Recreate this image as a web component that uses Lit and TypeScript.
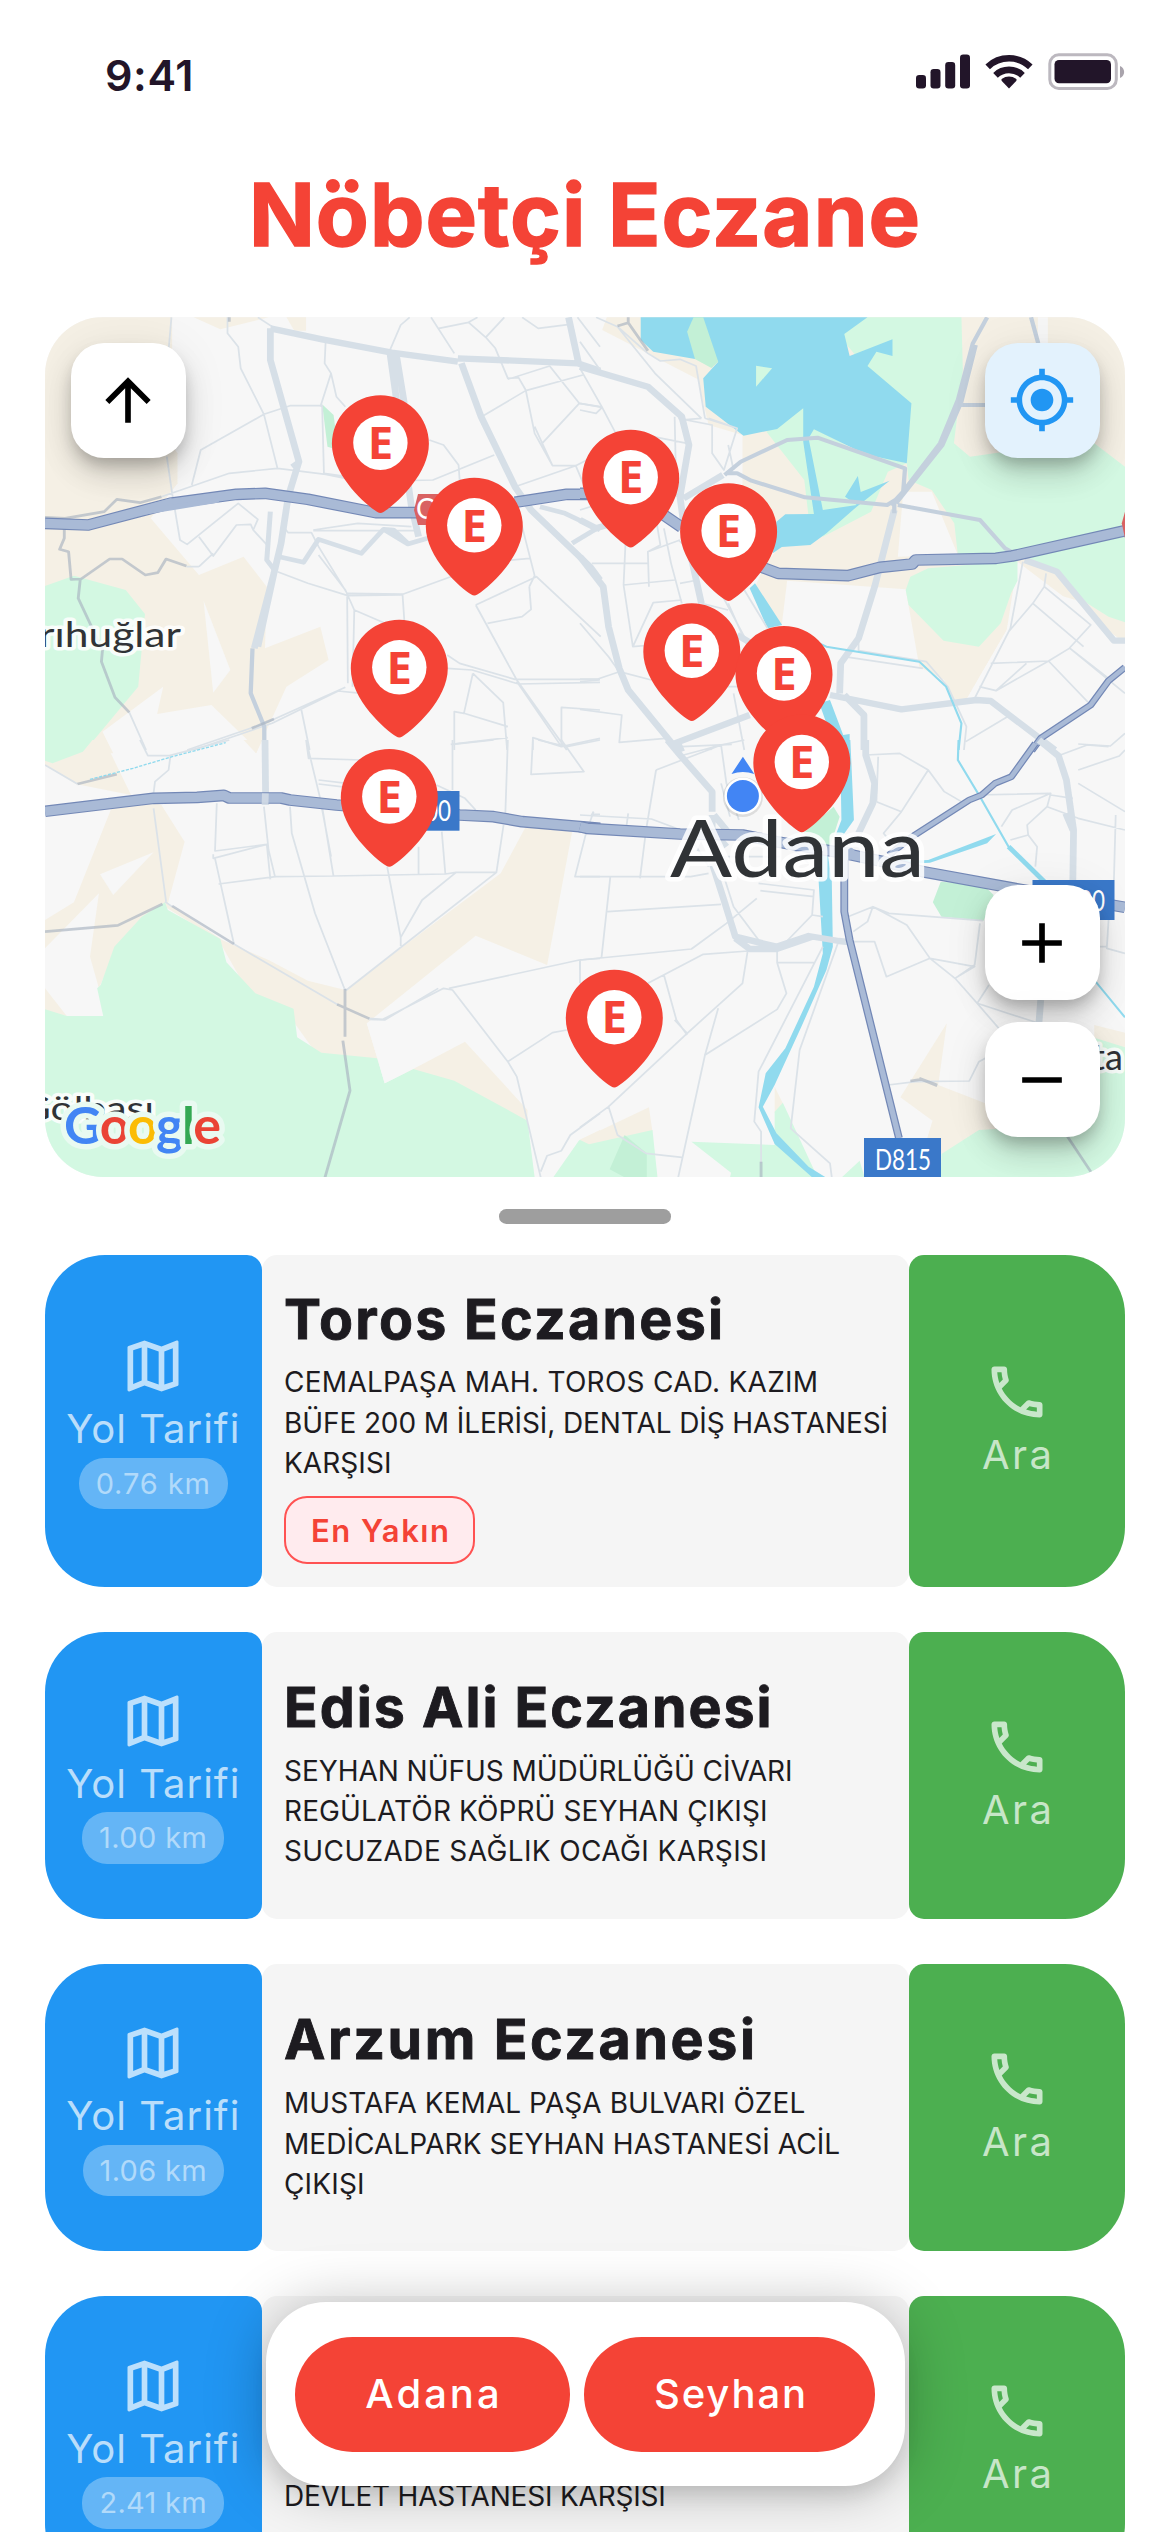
import { LitElement, html, svg, css, nothing } from 'lit';
import { customElement, property } from 'lit/decorators.js';
import { styleMap } from 'lit/directives/style-map.js';

interface Line {
  text: string;
  tracking: number;
}

interface Pharmacy {
  name: Line;
  distance: Line;
  address: Line[];
  nearest?: boolean;
}

const PHARMACIES: Pharmacy[] = [
  {
    name: { text: 'Toros Eczanesi', tracking: 2.3 },
    distance: { text: '0.76 km', tracking: 0.9 },
    address: [
      { text: 'CEMALPAŞA MAH. TOROS CAD. KAZIM', tracking: 0.27 },
      { text: 'BÜFE 200 M İLERİSİ, DENTAL DİŞ HASTANESİ', tracking: -0.1 },
      { text: 'KARŞISI', tracking: 0.05 },
    ],
    nearest: true,
  },
  {
    name: { text: 'Edis Ali Eczanesi', tracking: 2 },
    distance: { text: '1.00 km', tracking: 0.4 },
    address: [
      { text: 'SEYHAN NÜFUS MÜDÜRLÜĞÜ CİVARI', tracking: -0.04 },
      { text: 'REGÜLATÖR KÖPRÜ SEYHAN ÇIKIŞI', tracking: 0.11 },
      { text: 'SUCUZADE SAĞLIK OCAĞI KARŞISI', tracking: 0.38 },
    ],
  },
  {
    name: { text: 'Arzum Eczanesi', tracking: 2.6 },
    distance: { text: '1.06 km', tracking: 0.3 },
    address: [
      { text: 'MUSTAFA KEMAL PAŞA BULVARI ÖZEL', tracking: 0.06 },
      { text: 'MEDİCALPARK SEYHAN HASTANESİ ACİL', tracking: 0.06 },
      { text: 'ÇIKIŞI', tracking: 0.15 },
    ],
  },
  {
    name: { text: '', tracking: 0 },
    distance: { text: '2.41 km', tracking: 0.3 },
    address: [
      { text: '', tracking: 0 },
      { text: 'DEVLET HASTANESI KARŞISI', tracking: -0.2 },
    ],
  },
];

const tracking = (line: Line) => styleMap({ letterSpacing: `${line.tracking}px` });

const ICONS = {
  up: 'M4 12l1.41 1.41L11 7.83V20h2V7.83l5.58 5.59L20 12l-8-8-8 8z',
  locate:
    'M12 8c-2.21 0-4 1.79-4 4s1.79 4 4 4 4-1.79 4-4-1.79-4-4-4zm8.94 3c-.46-4.17-3.77-7.48-7.94-7.94V1h-2v2.06C6.83 3.52 3.52 6.83 3.06 11H1v2h2.06c.46 4.17 3.77 7.48 7.94 7.94V23h2v-2.06c4.17-.46 7.48-3.77 7.94-7.94H23v-2h-2.06zM12 19c-3.87 0-7-3.13-7-7s3.13-7 7-7 7 3.13 7 7-3.13 7-7 7z',
  plus: 'M19 13h-6v6h-2v-6H5v-2h6V5h2v6h6v2z',
  minus: 'M19 13H5v-2h14v2z',
  map: 'M20.5 3l-.16.03L15 5.1 9 3 3.36 4.9c-.21.07-.36.25-.36.48V20.5c0 .28.22.5.5.5l.16-.03L9 18.9l6 2.1 5.64-1.9c.21-.07.36-.25.36-.48V3.5c0-.28-.22-.5-.5-.5zM10 5.47l4 1.4v11.66l-4-1.4V5.47zm-5 .99l3-1.01v11.7l-3 1.16V6.46zm14 11.08l-3 1.01V6.86l3-1.16v11.84z',
  phone:
    'M6.54 5c.06.89.21 1.76.45 2.59l-1.2 1.2c-.41-1.2-.67-2.47-.76-3.79h1.51m9.86 12.02c.85.24 1.72.39 2.6.45v1.49c-1.32-.09-2.59-.35-3.8-.75l1.2-1.19M7.5 3H4c-.55 0-1 .45-1 1 0 9.39 7.61 17 17 17 .55 0 1-.45 1-1v-3.49c0-.55-.45-1-1-1-1.24 0-2.45-.2-3.57-.57-.1-.04-.21-.05-.31-.05-.26 0-.51.1-.71.29l-2.2 2.2c-2.83-1.45-5.15-3.76-6.59-6.59l2.2-2.2c.28-.28.36-.67.25-1.02C8.7 6.45 8.5 5.25 8.5 4c0-.55-.45-1-1-1z',
};

const icon = (d: string) =>
  html`<svg class="icon" viewBox="0 0 24 24" width="68" height="68"><path fill="currentColor" d=${d}></path></svg>`;

@customElement('status-bar')
export class StatusBar extends LitElement {
  static styles = css`
    :host {
      display: flex;
      justify-content: space-between;
      height: 120px;
      box-sizing: border-box;
      padding: 50px 45px 0 105px;
      color: #221529;
    }
    .time {
      font-size: 43px;
      font-weight: 600;
      line-height: 50px;
      letter-spacing: 0.6px;
    }
    .system {
      display: block;
    }
  `;

  render() {
    return html`
      <span class="time">9:41</span>
      <svg class="system" width="210" height="44" viewBox="915 50 210 44">
        <g fill="#221529">
          <rect x="916" y="75" width="10" height="13.5" rx="3.2"></rect>
          <rect x="930.5" y="69" width="10" height="19.5" rx="3.2"></rect>
          <rect x="945.2" y="62" width="10" height="26.5" rx="3.2"></rect>
          <rect x="960" y="54.5" width="10" height="34" rx="3.2"></rect>
          <path d="M1009 88.500l-7.200-7.400a1.600 1.600 0 0 1 .2-2.300 11.500 11.500 0 0 1 14 0 1.600 1.600 0 0 1 .2 2.300z"></path>
        </g>
        <g fill="none" stroke="#221529" stroke-width="6.600">
          <path d="M995.500 75.300a19.500 19.500 0 0 1 27 0"></path>
          <path d="M987.700 66.800a31 31 0 0 1 42.600 0"></path>
        </g>
        <rect x="1049.800" y="54.800" width="66.500" height="33.600" rx="9" fill="none" stroke="#bcb8bf" stroke-width="3"></rect>
        <rect x="1054.500" y="60" width="56.500" height="23.300" rx="4.500" fill="#221529"></rect>
        <path d="M1120 66c5.500 2 5.500 10 0 12z" fill="#a9a4ac"></path>
      </svg>
    `;
  }
}

/* Tile drawings use a 1568-unit-wide grid per tile; y runs at three units per pixel. */
const tile = (x: number, y: number, content: unknown) =>
  svg`<g transform=${`translate(${x} ${y}) scale(.35714 .33333)`}>${content}</g>`;

const land = svg`
  ${tile(40, 310, svg`
    <path class="sand" d="M14 22H370V500L385 520 310 625 445 795 570 740 635 830 630 1015 785 950 808 1050 690 1130 605 1330 590 1300 480 1185 328 1212 345 1130 175 1265 205 1330H14zM430 22L505 58 640 22zM690 22L712 62H745V22z"/>
    <path class="sand" d="M365 400L385 430V520L365 545z"/>
    <path class="base" d="M458 872L533 1080 485 1148z"/>
    <path class="park" d="M14 828L95 797 240 840 294 912 275 1130 120 1330H14z"/>
    <path class="wood" d="M790 283L822 315 835 420 805 410z"/>`)}
  ${tile(580, 310, svg`
    <path class="sand" d="M62 60L75 22H1526V1000L1495 985 1420 880 1225 820 1195 960 1080 1172 1038 1168 1020 1110 950 1070 912 838 580 812 565 945 490 830 520 760 560 710 455 600V375L360 345 330 208z"/>
    <path class="base" d="M1282 22H1310V100H1282zM905 545H985L1058 735 890 740zM1225 755L1526 1000 1300 1320H1100L1040 1168 1080 1172 1195 960z"/>
    <path class="park" d="M805 22H1068L1072 180 1047 400 1092 440 1170 428 1440 400 1526 470V937L1480 920 1420 880 1340 790 1270 750 1225 745 1058 735 1048 640 985 540 920 510 900 300 790 160 720 70zM925 800L975 775 1225 752V812L1207 850 1178 940 1117 1010 1018 992 920 885 912 840zM522 365L625 290 660 358 770 420 915 460 862 485 815 605 680 680 640 620 628 510zM322 147L372 173 345 100z"/>
    <path class="water" d="M170 22H805L740 72 755 138 875 88V138L830 125 805 168 928 280 915 460 830 440 770 418 655 358 640 385 680 600 775 585 742 560 778 498 786 546 867 512 775 590 690 670 645 705 565 711 540 730 550 635 575 613 655 612 625 395V295L552 357 458 377 352 290 345 205 387 155 345 100 322 147 205 125 170 90zM475 835L490 820 566 945 525 955zM670 1180L700 1170 737 1275 755 1272V1330H720z"/>
    <path class="park" d="M493 167L538 175 493 230z"/>
    <path class="wood" d="M318 22H345L387 155 368 174 322 147 300 65z"/>`)}
  ${tile(40, 740, svg`
    <path class="sand" d="M14 0H180L255 165 340 195 405 305 358 490 510 600 640 660 750 722 855 750 1290 400 1360 260 1490 275 1420 675 1220 587 915 850 945 955 1190 905 1365 1110V1145L1030 1000 900 960 780 950 700 830 590 770 500 600 350 500 215 620 165 745 140 650 165 460 14 625V540L95 487 200 205 255 165 100 132 14 75zM570 0H622L605 40zM14 745L75 828 14 815zM1510 1200L1568 1170V1205L1540 1213z"/>
    <path class="base" d="M318 337L168 403 205 465z"/>
    <path class="park" d="M14 0H147L120 35 35 70 14 62zM14 808L75 828H177L160 745 170 735 208 620 285 530 350 487 358 510 505 597 522 667 603 760 710 806 720 892 788 938 945 955 965 1030 1045 987 1160 1022 1365 1142 1385 1312H14zM1437 1312L1510 1200 1540 1213 1568 1205V1312z"/>
    <path class="base" d="M915 850L1190 905 1045 987 965 1030z"/>`)}
  ${tile(580, 740, svg`
    <path class="sand" d="M0 1200L193 1102 203 1175 25 1215zM545 1040L568 1090 545 1120zM1027 850L1003 1035 1135 1090 1180 1170 1020 1245 965 1220 987 1142 897 1072zM1440 855L1526 878V925L1440 905z"/>
    <path class="park" d="M0 1200L25 1213 203 1170 217 1312H0zM312 1205L545 1215V1115L568 1088 665 1312H420L423 1298zM733 1312L783 1262 797 1312H1010L1012 1242 1117 1170 1440 1150V893L1526 922V1312z"/>
    <path class="wood" d="M125 1185L187 1240V1312H125L83 1288zM1010 425L1130 435 1158 465 1130 542 1012 530 988 487zM710 200L727 230 700 320 665 310 625 280z"/>
    <path class="water" d="M728 0H757L767 240 737 285H716L732 240zM668 420L672 345H694L705 420 708 620 690 690 622 855 545 1035 512 1100 550 1180 640 1280 688 1312H650L545 1212 500 1102 520 1000 575 925 655 740 680 640zM900 372L908 357 925 362 975 360 1165 282 1140 310 980 368z"/>`)}
`;

const roads = svg`
  ${tile(40, 310, svg`
    <path class="lane" d="M368 22L360 120M610 22L650 50M525 22V70L555 110 562 175 627 313 665 475M627 313L450 420 425 525M627 313L700 287H790L795 490 860 500M800 90L797 160 815 190 785 290M815 190L830 260 855 290M340 560L530 490 665 475 800 493 900 515 1100 510 1272 435M1090 390L1130 405 1172 465 1175 510M980 120L1010 45 1035 22M1095 22L1160 130M1117 55L1200 37 1225 22M1200 37L1248 82 1275 115 1310 205 1340 203 1360 240 1385 370 1435 467H1500L1568 430M1248 82L1300 22M1350 22L1395 55 1478 44M1505 22L1568 110M1240 318L1360 242 1520 195M1310 208L1427 168 1510 280 1568 290M1510 280L1408 398M1385 350L1435 467M1500 467L1525 530 1568 500M1330 530L1500 467M355 440L370 550 392 690 412 703 485 640 555 580 610 628 597 660 640 710M445 680L485 738 550 645 590 643 597 660M445 770L485 730M410 770H445M685 655L695 668H760L780 710 860 850 862 1120M765 662H1050M765 660L890 640 1040 650M665 785L750 820 862 857 1010 855 1150 800M862 850L1015 852 1020 930M780 735L855 840 880 900 1010 960M880 900L875 1130M1220 885L1390 800 1570 980M1370 830L1375 898 1350 920 1253 940M1220 885L1335 1110 1475 1320M1350 650L1385 797 1370 830M1270 755L1372 745M1140 1035L1175 1060 1330 1108H1568M1140 1075L1210 1080 1340 1122 1568 1117M1212 1090L1187 1210 1310 1250M1212 1090L1297 1178 1308 1320M1160 1320V1205L1187 1210M1150 1303L1310 1283M1335 1115L1460 1310 1568 1285M1568 1200L1460 1192V1310M1380 1320V1283L1460 1310M412 1320L630 1240 855 1132M430 1320L650 1240 835 1143 900 1150M732 1200L755 1320M250 1207L297 1320"/>
    <path class="mid" d="M660 738L738 757 780 688 900 730 962 658 1030 702 1085 685M962 658L990 660 1030 700M645 605L635 750 660 785M725 455L705 470M1400 590L1470 610 1568 660M1560 655L1490 700"/>
    <path class="major" d="M645 55L790 88 985 128 1170 155M1170 145L1505 160 1568 182M645 55V150L725 455 695 560 675 700 655 790 600 1015M980 130L1040 590 1060 680M997 130L1020 280M1180 160L1235 320 1330 530 1375 600 1540 770 1568 810M1480 22L1508 160M655 790L610 1010"/>
    <path class="second" d="M595 1015L590 1150 628 1250V1320"/>
    <path class="track" d="M14 622L70 625 180 605 215 568 280 578 340 560M68 655V685L55 718 80 725 87 808 115 807 195 747H230L295 795 330 788 353 747 410 768M113 805L107 865 175 1020 172 1055 210 1162 250 1207M593 1255L655 1227M530 22V35"/>
    <path class="edge" d="M14 640L135 645 365 580 550 553 630 550 750 568 940 608H1060M1330 577L1475 553H1568"/>
    <path class="trunk" d="M14 640L135 645 365 580 550 553 630 550 750 568 940 608H1060M1330 577L1475 553H1568"/>
    <path class="trunk thin" d="M200 625L370 572M260 612L500 570"/>`)}
  ${tile(580, 310, svg`
    <path class="lane" d="M45 22L105 50 210 190 340 325M105 50L190 130 225 153 280 148 325 168 350 325M0 95L60 185M0 175L62 292 110 390M0 280L62 292 45 310 0 300M275 325L370 345V430L403 480 440 355 360 325M350 325L440 355M340 325L280 330M205 380L300 400M415 405L430 480M270 560L265 320M0 600L60 580M235 655L255 760 285 880M215 640L225 705 190 725 193 830M190 725L280 690M33 760H190M122 825L265 810M130 640L122 825 148 1010 205 878 285 870M148 1010L200 1005M280 820L330 810M340 880L415 900M275 690L330 740M0 940L80 1040 110 1085 200 1110M0 1107H50L110 1085M0 1115L55 1110M0 1198L117 1215 110 1297 240 1285M400 860L470 1000M460 840L525 955M415 880L465 1000M410 1130H470M430 1150L460 1320M285 1310L425 1303M365 1320L380 1305M780 985V1022L970 1055 1030 1130 1082 1250 1075 1320M740 1040L960 1075M1240 755L1205 955 1105 1165M1305 790L1300 830 1430 945 1370 1015 1312 1053 1150 1060M1300 830L1268 880 1410 1010M1268 880L1200 965M1372 1015L1526 1150M1312 1053L1430 1185M1480 1105L1372 1015M1250 1060L1165 1142 1118 1130M1312 1053L1165 1142M1080 1295L1205 1215M1526 1270L1485 1308 1395 1302"/>
    <path class="major" d="M0 170L190 230 285 320 305 405 280 560 290 640 340 880M0 630L45 655 140 625M0 740L65 830 80 950 110 1075 135 1140 265 1310M265 1300L475 1215M440 975L480 1000M880 600L825 830 780 985 730 1060 727 1150M700 1155L900 1198 1110 1170 1150 1173 1330 1320M740 1155L795 1215V1320M1245 750L1335 785 1495 992H1526M290 565L400 495"/>
    <path class="second" d="M405 495L450 455 580 390 665 383 910 475 905 545 870 585M410 490H440L480 512 630 562 860 585 890 565 1008 400 1058 270 1100 100 1140 22M885 580L1015 405 1068 275 1108 105M890 585L1120 630 1190 715 1240 745M1060 285H1135M1263 22L1283 100M880 570V610"/>
    <path class="track" d="M105 48L135 38V22M135 38L190 122"/>
    <path class="stream" d="M670 1000L690 1010 950 1055 1025 1130 1068 1240 1060 1320"/>
    <path class="edge" d="M0 550H20M225 608L285 652M510 772L555 790 750 797 840 772 930 762 940 750 1165 745 1210 738 1526 662"/>
    <path class="trunk" d="M0 550H20M225 608L285 652M510 772L555 790 750 797 840 772 930 762 940 750 1165 745 1210 738 1526 662"/>
    <path class="edge slim" d="M1526 1072L1480 1112 1430 1185 1290 1285 1265 1322"/>
    <path class="trunk slim" d="M1526 1072L1480 1112 1430 1185 1290 1285 1265 1322"/>
    <path fill="#d96262" d="M1526 605L1517 640 1526 685z"/>`)}
  ${tile(40, 740, svg`
    <path class="lane" d="M280 0L302 47H362L530 0M365 50L360 90 322 125 318 160M318 205L353 485M495 190L490 333 635 313M485 343V355L635 313 645 418M490 355L543 612M500 432L660 410 820 408 1135 402 1165 397H1278M627 200L640 330 658 410M700 200L705 280 770 520 852 745 858 750 1278 397 1298 255M745 0L790 200 822 410M745 0L752 55 900 60M780 120L860 130M780 132L860 142M785 180L815 350M1155 0V150M1155 13L1270 0M1310 0L1303 220M1395 0L1475 20 1568 0M1460 0L1523 95 1375 103 1380 0M1110 135L1190 175 1220 210M1125 275L1135 402M1060 320V402M1165 397L1070 480 1010 592V618M972 380L1010 592M1530 275L1498 410H1568M1550 215L1540 245M1545 223H1568M543 612L835 795M920 835L960 838 1130 745 1155 750 1310 965 1335 1010 1402 1312M920 838L965 840 1115 745M1145 745L1510 660 1568 655M1512 660V730M1310 965L1435 878 1475 870M1402 1295L1420 1247 1460 1232 1485 1185 1568 1120M350 485L370 500M14 75L105 132"/>
    <path class="major" d="M630 0L632 195"/>
    <path class="track" d="M105 132L215 103M14 575L218 556 343 492M370 498L543 612M832 793L922 836M854 747V890M848 902L868 1052 798 1312"/>
    <path class="stream dash" d="M140 118L260 85 370 50 520 8"/>
    <path class="edge" d="M14 214L318 175 440 172 515 166 530 174H675L700 180 830 195 1175 225 1270 230 1350 245 1568 265"/>
    <path class="trunk" d="M14 214L318 175 440 172 515 166 530 174H675L700 180 830 195 1175 225 1270 230 1350 245 1568 265"/>
    <path class="major" d="M631 160L630 195" opacity=".8"/>`)}
  ${tile(580, 740, svg`
    <path class="lane" d="M0 225L200 237 320 285M30 230L38 215M213 90L185 270 168 415M213 90L395 15 460 0M290 45L395 15 410 130 445 240M135 220L130 260M395 130L420 230M0 410H85L310 410 360 400M85 410L60 655M77 515L395 493M0 660L312 627 410 550 495 475M0 690V660M190 730L345 643 470 633M235 705L270 840 300 885M265 840L300 880M0 1162L80 1100 300 880 455 730 470 630M552 630V668H655M552 668L578 760 552 808 350 945 387 805M350 945L275 1312M80 1100L105 1185 185 1240 285 1252M500 430L655 450 650 525 555 630M505 452L655 470M650 525L680 530M722 610L615 930 590 1165 700 1270 705 1312M680 620L500 995 488 1145 507 1175V1270M400 400L430 500 500 600M320 310L360 380M290 340L330 330M460 340V380M380 340L460 390M600 330L640 370M380 350H560M800 45L895 40 975 90 1020 155 1068 185M975 90L900 215 830 185M835 50L830 185M900 215L850 280 895 340M760 605H825L858 710 980 655 1105 680 1050 715M750 530L820 500 865 520 1128 542M820 500L805 545 765 575M820 500L915 555 980 655 1050 715 1112 790 1175 868M1050 715L1105 675 1120 550M1112 790L1145 735M1112 790L1285 850M862 1035L940 1025 1090 1023 1117 965 1135 955M1105 165L1318 160 1308 200 1252 255 1255 285 1280 320 1275 380M1318 165L1380 175M1308 200L1395 235 1526 270M1205 300L1255 285M1180 260L1210 210 1318 160M1395 130L1526 215M1345 45L1420 15 1480 20M1526 30L1510 48 1395 90M1500 225L1495 420M1480 540L1475 625 1526 640M1455 620H1475"/>
    <path class="major" d="M245 0L280 45 370 155V215M270 0L285 35M370 225V270L410 320M375 225L425 290M370 370L400 470 435 590 550 620 640 588 725 603 760 607M435 595L475 627H550L650 590M800 0V45L825 130 820 190 780 280M1285 0L1340 48 1362 120 1382 270 1380 420M1290 780L1285 850M1360 220L1380 270"/>
    <path class="track" d="M507 1265V1312M925 1023L955 1018 1000 1037M1365 1190L1432 1298M950 1015L1000 1035"/>
    <path class="stream" d="M1060 0L1058 60 1120 170 1200 320 1300 425M1440 720L1526 832"/>
    <path class="stream bold" d="M1200 320L1300 425"/>
    <path class="edge" d="M0 260L20 265 280 282 455 285 550 305 740 340 880 372 960 395 1200 442 1526 502"/>
    <path class="edge mid-trunk" d="M740 345V515L755 600 893 1194"/>
    <path class="edge slim" d="M865 345L930 290 1090 180 1125 165 1162 130 1208 110 1275 10"/>
    <path class="trunk" d="M0 260L20 265 280 282 455 285 550 305 740 340 880 372 960 395 1200 442 1526 502"/>
    <path class="trunk mid-trunk" d="M740 345V515L755 600 893 1194"/>
    <path class="trunk slim" d="M865 345L930 290 1090 180 1125 165 1162 130 1208 110 1275 10"/>
    <circle cx="750" cy="340" r="20" fill="#a9bad6"/>`)}
`;

const PINS: [number, number][] = [
  [380.4, 513.3],
  [474.3, 595.8],
  [399.3, 737.8],
  [630.7, 547.7],
  [728.6, 601.2],
  [691.8, 721.3],
  [784, 744],
  [801.8, 832.5],
  [389.3, 867],
  [614.3, 1087.7],
];

@customElement('city-map')
export class CityMap extends LitElement {
  static styles = css`
    :host {
      display: block;
      position: relative;
      height: 860px;
      border-radius: 58px;
      overflow: hidden;
      background: #f7f7f7;
    }
    .canvas {
      display: block;
      width: 1080px;
      height: 860px;
    }
    .base { fill: #f7f7f7; }
    .sand { fill: #f5f0e5; }
    .park { fill: #d3f8e2; }
    .wood { fill: #c3f0d6; }
    .water { fill: #90daee; }
    .lane, .mid, .major, .second, .track, .stream, .edge, .trunk {
      fill: none;
      stroke-linejoin: round;
    }
    .lane { stroke: #dbe2e8; stroke-width: 5; }
    .mid { stroke: #d6dfe7; stroke-width: 14; }
    .major { stroke: #d6dfe7; stroke-width: 19; }
    .second { stroke: #c4d0dd; stroke-width: 12; }
    .track { stroke: #a8b2c0; stroke-opacity: .65; stroke-width: 8; }
    .stream { stroke: #90daee; stroke-width: 6; }
    .stream.bold { stroke-width: 14; }
    .stream.dash { stroke-dasharray: 9 4; stroke-width: 4; }
    .edge { stroke: #7388b6; stroke-width: 35; }
    .trunk { stroke: #a9bad6; stroke-width: 28; }
    .trunk.thin { stroke-width: 16; }
    .edge.mid-trunk { stroke-width: 22; }
    .trunk.mid-trunk { stroke-width: 15; }
    .edge.slim { stroke-width: 20; }
    .trunk.slim { stroke-width: 13; }
    .place {
      font-family: Lato, sans-serif;
      fill: #303336;
      stroke: #fff;
      stroke-opacity: .85;
      paint-order: stroke;
      stroke-linejoin: round;
    }
    .shield {
      font-family: Lato, sans-serif;
      font-size: 28px;
      fill: #fff;
    }
    .brand {
      font-family: Lato, sans-serif;
      font-size: 52px;
      font-weight: 700;
      stroke: #e9faf1;
      stroke-width: 11px;
      paint-order: stroke;
      stroke-linejoin: round;
    }
    .pin-letter {
      font-family: 'Open Sans', 'Noto Sans', sans-serif;
      font-weight: 700;
      font-size: 45.5px;
      text-anchor: middle;
      fill: #f44336;
    }
    .controls {
      position: absolute;
      inset: 25.5px;
      display: grid;
      grid-template-columns: 115px 115px;
      grid-template-rows: 115px 1fr;
      justify-content: space-between;
    }
    .zoom {
      grid-column: 2;
      display: flex;
      flex-direction: column;
      justify-content: flex-end;
      gap: 22px;
      padding-bottom: 14.5px;
    }
    .control {
      width: 115px;
      height: 115px;
      border: 0;
      padding: 0;
      border-radius: 33px;
      background: #fff;
      color: #000;
      display: grid;
      place-items: center;
      box-shadow: 0 9px 15px -3px rgba(0, 0, 0, .22), 0 18px 30px rgba(0, 0, 0, .13), 0 4px 48px rgba(0, 0, 0, .07);
    }
    .control.active {
      background: #e3f2fd;
      color: #2196f3;
    }
  `;

  render() {
    return html`
      <svg class="canvas" viewBox="45 317 1080 860">
        ${land} ${roads}
        <path d="M418 494h20v31h-20l-4-15z" fill="#d96262"></path>
        <text class="shield" x="416" y="519">O-21</text>
        <rect x="372" y="791" width="87.5" height="39.7" fill="#3a78c9"></rect>
        <text class="shield" x="395" y="821" textLength="56" lengthAdjust="spacingAndGlyphs">D400</text>
        <rect x="1032.5" y="880" width="82" height="40" fill="#3a78c9"></rect>
        <text class="shield" x="1049" y="911" textLength="56" lengthAdjust="spacingAndGlyphs">D400</text>
        <rect x="864" y="1138" width="77" height="39.5" fill="#3a78c9"></rect>
        <text class="shield" x="875" y="1169.5" textLength="56" lengthAdjust="spacingAndGlyphs">D815</text>
        <path d="M742.900 756.700l11.400 17.300q-11.400-4-22.800 0z" fill="#4285f4"></path>
        <circle cx="742.9" cy="797" r="20" fill="#000" opacity=".1"></circle>
        <circle cx="742.9" cy="796" r="18.5" fill="#fff"></circle>
        <circle cx="742.9" cy="796" r="16" fill="#4285f4"></circle>
        <text class="place" x="39" y="646.5" font-size="34" stroke-width="7" textLength="142" lengthAdjust="spacingAndGlyphs">rıhuğlar</text>
        <text class="place" x="21" y="1120" font-size="33" stroke-width="7" textLength="133" lengthAdjust="spacingAndGlyphs">Gölbaşı</text>
        <text class="place" x="1092" y="1070" font-size="36" stroke-width="7">ta</text>
        <text class="place" x="670" y="877" font-size="79" stroke-width="9" textLength="255" lengthAdjust="spacingAndGlyphs">Adana</text>
        <text class="brand" x="64" y="1144" textLength="157">
          <tspan fill="#4285f4">G</tspan><tspan fill="#ea4335">o</tspan><tspan fill="#fbbc05">o</tspan><tspan fill="#4285f4">g</tspan><tspan fill="#34a853">l</tspan><tspan fill="#ea4335">e</tspan>
        </text>
        ${PINS.map(
          ([x, y]) => svg`
            <g transform=${`translate(${x} ${y})`}>
              <path fill="#f44336" d="M-3-1.200C-14-8-48.500-38-48.500-69.500a48.500 48.500 0 0 1 97 0C48.500-38 14-8 3-1.200Q0 .8-3-1.200z"></path>
              <circle cy="-70.5" r="27.2" fill="#fff"></circle>
              <text class="pin-letter" y="-54.300">E</text>
            </g>`,
        )}
      </svg>
      <div class="controls">
        <button class="control">${icon(ICONS.up)}</button>
        <button class="control active">${icon(ICONS.locate)}</button>
        <div class="zoom">
          <button class="control">${icon(ICONS.plus)}</button>
          <button class="control">${icon(ICONS.minus)}</button>
        </div>
      </div>
    `;
  }
}

@customElement('pharmacy-card')
export class PharmacyCard extends LitElement {
  static styles = css`
    :host {
      display: block;
    }
    .card {
      display: grid;
      grid-template-columns: 216.5px 1fr 216px;
      height: 287.4px;
    }
    .card.nearest {
      height: 331.7px;
    }
    .action {
      display: flex;
      flex-direction: column;
      align-items: center;
      justify-content: center;
      color: rgba(255, 255, 255, .7);
      font-size: 40px;
      font-weight: 400;
      line-height: 57.6px;
      white-space: nowrap;
    }
    .route {
      background: #2196f3;
      border-radius: 60px 15px 15px 60px;
      letter-spacing: 1px;
    }
    .call {
      background: #4caf50;
      border-radius: 15px 60px 60px 15px;
      letter-spacing: 2.4px;
    }
    .call span {
      padding-left: 2.4px;
    }
    .icon {
      display: block;
    }
    .distance {
      box-sizing: border-box;
      height: 51.5px;
      padding: 0 17px;
      border-radius: 25px;
      background: rgba(255, 255, 255, .3);
      color: rgba(255, 255, 255, .5);
      font-size: 29px;
      line-height: 52.5px;
    }
    .info {
      display: flex;
      flex-direction: column;
      justify-content: center;
      align-items: flex-start;
      padding-left: 22.5px;
      border-radius: 15px;
      background: #f5f5f5;
      color: #1d1b20;
      white-space: nowrap;
    }
    .nearest .info {
      padding-top: 12.7px;
    }
    .name {
      margin: 0 0 15.2px;
      height: 56.6px;
      font-size: 55.5px;
      font-weight: 700;
      line-height: 55px;
      -webkit-text-stroke: 0.9px currentColor;
    }
    .line {
      height: 40.3px;
      font-size: 28px;
      font-weight: 400;
      line-height: 40.3px;
    }
    .badge {
      box-sizing: border-box;
      height: 68px;
      margin-top: 12.5px;
      padding: 0 23px 0 25px;
      border: 2px solid #ff5252;
      border-radius: 23px;
      background: #ffebee;
      color: #f44336;
      font-size: 31px;
      font-weight: 600;
      line-height: 65px;
      letter-spacing: 1.5px;
    }
  `;

  @property({ attribute: false }) pharmacy!: Pharmacy;

  render() {
    const p = this.pharmacy;
    return html`
      <article class="card ${p.nearest ? 'nearest' : ''}">
        <div class="action route">
          ${icon(ICONS.map)}
          <span>Yol Tarifi</span>
          <span class="distance" style=${tracking(p.distance)}>${p.distance.text}</span>
        </div>
        <div class="info">
          <h2 class="name" style=${tracking(p.name)}>${p.name.text}</h2>
          ${p.address.map((l) => html`<div class="line" style=${tracking(l)}>${l.text}</div>`)}
          ${p.nearest ? html`<span class="badge">En Yakın</span>` : nothing}
        </div>
        <div class="action call">
          ${icon(ICONS.phone)}
          <span>Ara</span>
        </div>
      </article>
    `;
  }
}

@customElement('app-root')
export class AppRoot extends LitElement {
  static styles = css`
    :host {
      display: block;
      position: relative;
      width: 1170px;
      height: 2532px;
      overflow: hidden;
      background: #fff;
      font-family: Inter, 'Open Sans', sans-serif;
    }
    .title {
      margin: 0;
      height: 197px;
      color: #f44336;
      font-size: 86.5px;
      font-weight: 700;
      line-height: 190px;
      letter-spacing: 1.05px;
      text-align: center;
      white-space: nowrap;
      -webkit-text-stroke: 1.4px currentColor;
    }
    .content {
      padding: 0 45px;
    }
    .handle {
      width: 172px;
      height: 14.5px;
      margin: 32px auto 31.5px;
      border-radius: 7.3px;
      background: #9e9e9e;
    }
    .list {
      display: flex;
      flex-direction: column;
      gap: 45px;
    }
    .picker {
      position: absolute;
      left: 265.5px;
      top: 2302px;
      box-sizing: border-box;
      width: 639px;
      height: 184px;
      padding: 35px 29.5px;
      display: flex;
      gap: 14px;
      border-radius: 60px;
      background: #fff;
      box-shadow: 0 12px 20px -4px rgba(0, 0, 0, .1), 0 4px 60px rgba(0, 0, 0, .26);
    }
    .choice {
      flex: 275px 0 0;
      height: 114.7px;
      border: 0;
      padding: 0 0 0 3px;
      border-radius: 58px;
      background: #f44336;
      color: #fff;
      font: 500 40px/110px Inter, sans-serif;
      letter-spacing: 3px;
    }
    .choice + .choice {
      flex-basis: 291px;
      letter-spacing: 1.9px;
    }
  `;

  render() {
    return html`
      <status-bar></status-bar>
      <h1 class="title">Nöbetçi Eczane</h1>
      <main class="content">
        <city-map></city-map>
        <div class="handle"></div>
        <section class="list">
          ${PHARMACIES.map((p) => html`<pharmacy-card .pharmacy=${p}></pharmacy-card>`)}
        </section>
      </main>
      <nav class="picker">
        <button class="choice">Adana</button>
        <button class="choice">Seyhan</button>
      </nav>
    `;
  }
}
